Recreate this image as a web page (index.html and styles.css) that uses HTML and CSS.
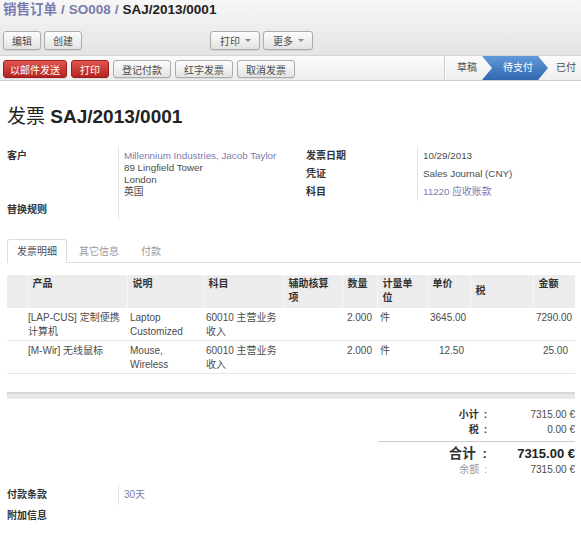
FILE: index.html
```html
<!DOCTYPE html>
<html lang="zh-CN">
<head>
<meta charset="utf-8">
<title>发票 SAJ/2013/0001</title>
<link rel="stylesheet" href="styles.css">
</head>
<body>
<div class="vm-header">
  <div class="breadcrumb"><a class="bc-link">销售订单</a><span class="bc-sep">/</span><a class="bc-link">SO008</a><span class="bc-sep">/</span><span class="bc-current">SAJ/2013/0001</span></div>
  <div class="toolbar">
    <div class="btn-group">
      <button class="btn">编辑</button>
      <button class="btn">创建</button>
    </div>
    <div class="btn-group sidebar">
      <button class="btn btn-drop">打印<span class="caret"></span></button>
      <button class="btn btn-drop">更多<span class="caret"></span></button>
    </div>
  </div>
</div>
<div class="form-header">
  <div class="actions">
    <button class="btn btn-red btn-wide">以邮件发送</button>
    <button class="btn btn-red">打印</button>
    <button class="btn">登记付款</button>
    <button class="btn">红字发票</button>
    <button class="btn">取消发票</button>
  </div>
  <div class="statusbar">
    <span class="st-item">草稿</span>
    <span class="st-item st-active">待支付</span>
    <span class="st-item st-last">已付</span>
  </div>
</div>
<div class="sheet">
  <h1 class="title"><span class="title-kind">发票</span> <span class="title-num">SAJ/2013/0001</span></h1>
  <div class="groups">
    <div class="group">
      <div class="lbl">客户</div>
      <div class="val"><a class="link">Millennium Industries, Jacob Taylor</a><br>89 Lingfield Tower<br>London<br>英国</div>
      <div class="lbl">替换规则</div>
      <div class="val"></div>
    </div>
    <div class="group">
      <div class="lbl">发票日期</div>
      <div class="val">10/29/2013</div>
      <div class="lbl">凭证</div>
      <div class="val">Sales Journal (CNY)</div>
      <div class="lbl">科目</div>
      <div class="val"><a class="link">11220 应收账款</a></div>
    </div>
  </div>

  <div class="tabs">
    <span class="tab active">发票明细</span>
    <span class="tab">其它信息</span>
    <span class="tab">付款</span>
  </div>

  <table class="lines">
    <colgroup>
      <col class="c-handle"><col class="c-product"><col class="c-desc"><col class="c-account"><col class="c-analytic"><col class="c-qty"><col class="c-uom"><col class="c-price"><col class="c-tax"><col class="c-amount">
    </colgroup>
    <thead>
      <tr>
        <th></th>
        <th>产品</th>
        <th>说明</th>
        <th>科目</th>
        <th>辅助核算项</th>
        <th>数量</th>
        <th>计量单位</th>
        <th>单价</th>
        <th class="th-mid">税</th>
        <th>金额</th>
      </tr>
    </thead>
    <tbody>
      <tr>
        <td></td>
        <td class="td-product">[LAP-CUS] 定制便携计算机</td>
        <td>Laptop Customized</td>
        <td>60010 主营业务收入</td>
        <td></td>
        <td class="num">2.000</td>
        <td>件</td>
        <td class="num num-price">3645.00</td>
        <td></td>
        <td class="num num-amount">7290.00</td>
      </tr>
      <tr>
        <td></td>
        <td class="td-product">[M-Wir] 无线鼠标</td>
        <td>Mouse, Wireless</td>
        <td>60010 主营业务收入</td>
        <td></td>
        <td class="num">2.000</td>
        <td>件</td>
        <td class="num num-price">12.50</td>
        <td></td>
        <td class="num num-amount">25.00</td>
      </tr>
    </tbody>
  </table>
  <div class="filler"></div>
  <div class="list-footer"></div>

  <div class="totals">
    <div class="t-row"><span class="t-lbl">小计&ensp;:</span><span class="t-val">7315.00 €</span></div>
    <div class="t-row"><span class="t-lbl">税&ensp;:</span><span class="t-val">0.00 €</span></div>
    <div class="t-row t-total"><span class="t-lbl">合计&ensp;:</span><span class="t-val">7315.00 €</span></div>
    <div class="t-row t-residual"><span class="t-lbl">余额&ensp;:</span><span class="t-val">7315.00 €</span></div>
  </div>

  <div class="bottom">
    <div class="lbl">付款条款</div>
    <div class="val"><a class="link">30天</a></div>
    <div class="lbl lbl-notes">附加信息</div>
    <div></div>
  </div>
</div>
</body>
</html>
```

FILE: styles.css
```css
* { box-sizing: border-box; }

body {
  margin: 0;
  width: 581px;
  overflow: hidden;
  font-family: "Liberation Sans", "Noto Sans CJK SC", sans-serif;
  font-size: 10px;
  line-height: 12px;
  color: #4c4c4c;
  background: #fff;
}

a { text-decoration: none; }

/* ---------- top header ---------- */
.vm-header {
  height: 56px;
  padding: 0 3px;
  background: linear-gradient(#f7f7f7, #e4e4e4);
  border-bottom: 1px solid #d4d4d4;
}

.breadcrumb {
  height: 22px;
  line-height: 19px;
  font-size: 13.5px;
  font-weight: bold;
  color: #7c7bad;
  white-space: nowrap;
}

.bc-link { color: #7c7bad; }
.bc-sep { margin: 0 4px; }
.bc-current { color: #222; }

.toolbar {
  display: flex;
  margin-top: 9px;
}

.btn-group {
  display: flex;
  gap: 3px;
}

.sidebar { margin-left: 128px; }

.btn {
  display: inline-flex;
  align-items: center;
  height: 19px;
  padding: 0 8px;
  font-family: "Liberation Sans", "Noto Sans CJK SC", sans-serif;
  font-size: 10px;
  color: #4c4c4c;
  background: linear-gradient(#fdfdfd, #e3e3e3);
  border: 1px solid #ababab;
  border-radius: 3px;
  box-shadow: 0 1px 1px rgba(0, 0, 0, 0.08);
  white-space: nowrap;
}

.btn-drop { padding: 0 8px 0 9px; }

.caret {
  display: inline-block;
  margin-left: 5px;
  border-top: 3px solid #888;
  border-left: 3px solid transparent;
  border-right: 3px solid transparent;
}

/* ---------- form header ---------- */
.form-header {
  display: flex;
  height: 25px;
  background: linear-gradient(#fbfbfb, #eeeeee);
  border-bottom: 1px solid #cdcdcd;
}

.actions {
  display: flex;
  gap: 4px;
  padding: 4px 0 0 3px;
}

.actions .btn { height: 18px; }
.actions .btn-wide { padding: 0 6px; }

.btn-red {
  color: #fff;
  background: linear-gradient(#df5550, #b5231f);
  border-color: #9e1d1a;
}

.statusbar {
  display: flex;
  margin-left: auto;
  height: 24px;
  border-left: 1px solid #cfcfcf;
  box-shadow: inset 1px 0 #fff;
}

.st-item {
  line-height: 24px;
  padding: 0 5px 0 12px;
  color: #4c4c4c;
  white-space: nowrap;
}

.st-active {
  padding: 0 15px 0 21px;
  color: #fff;
  background: linear-gradient(#6199d8, #2f68b1);
  clip-path: polygon(0 0, calc(100% - 10px) 0, 100% 50%, calc(100% - 10px) 100%, 0 100%, 10px 50%);
}

.st-last { padding-left: 8px; }

/* ---------- sheet ---------- */
.sheet { padding: 0 6px 0 7px; }

.title {
  margin: 24px 0 0;
  font-size: 19px;
  line-height: 24px;
  font-weight: normal;
  color: #222;
}

.title-num { font-weight: bold; }

.groups {
  display: grid;
  grid-template-columns: 299px 1fr;
  margin-top: 18px;
}

.group {
  display: grid;
  grid-template-columns: 111px 1fr;
  align-content: start;
}

.lbl {
  padding: 3px 0;
  font-weight: bold;
  color: #333;
}

.val {
  min-height: 18px;
  padding: 3px 0 3px 5px;
  border-left: 1px solid #e3e3e3;
}

.group .val { font-size: 9.8px; }

.link { color: #7c7bad; }

/* ---------- tabs ---------- */
.tabs {
  display: flex;
  height: 24px;
  margin: 20px -6px 0 0;
  border-bottom: 1px solid #dddddd;
}

.tab {
  height: 24px;
  margin-right: 2px;
  padding: 0 9px;
  line-height: 23px;
  color: #999;
  border: 1px solid transparent;
  border-bottom: none;
  border-radius: 3px 3px 0 0;
}

.tab.active {
  color: #4c4c4c;
  background: #fff;
  border-color: #dddddd;
}

/* ---------- lines table ---------- */
.lines {
  width: 568px;
  margin-top: 12px;
  border-collapse: collapse;
  table-layout: fixed;
}

.c-handle { width: 20px; }
.c-product { width: 100px; }
.c-desc { width: 76px; }
.c-account { width: 80px; }
.c-analytic { width: 59px; }
.c-qty { width: 35px; }
.c-uom { width: 50px; }
.c-price { width: 43px; }
.c-tax { width: 63px; }
.c-amount { width: 42px; }

.lines th {
  padding: 2px 6px 3px 5px;
  line-height: 14px;
  text-align: left;
  vertical-align: top;
  font-weight: bold;
  color: #333;
  background: #ececec;
  border-left: 1px solid #f7f7f7;
}

.lines th:first-child { border-left: none; }
.lines th.th-mid { vertical-align: middle; }

.lines td {
  padding: 3px 3px 1px;
  line-height: 14px;
  vertical-align: top;
  border-bottom: 1px solid #e6e6e6;
}

.lines td.td-product { padding-left: 1px; }
.lines td.num { text-align: right; padding-right: 5px; }
.lines td.num-price { padding-right: 6px; }
.lines td.num-amount { padding-right: 7px; }

.filler { height: 18px; }

.list-footer {
  width: 568px;
  height: 7px;
  background: #e9e9e9;
  border-top: 2px solid #d6d6d6;
}

/* ---------- totals ---------- */
.totals {
  width: 197px;
  margin: 8px 0 0 auto;
}

.t-row {
  display: flex;
  line-height: 15px;
}

.t-lbl {
  width: 109px;
  text-align: right;
  font-weight: bold;
  color: #333;
}

.t-val {
  flex: 1;
  text-align: right;
}

.t-total {
  margin-top: 4px;
  padding-top: 3px;
  line-height: 18px;
  border-top: 1px solid #cccccc;
}

.t-total .t-lbl { font-size: 13.5px; }
.t-total .t-val { font-size: 13px; font-weight: bold; color: #222; }

.t-residual { line-height: 14px; }
.t-residual .t-lbl { font-weight: normal; color: #999; }

/* ---------- bottom ---------- */
.bottom {
  display: grid;
  grid-template-columns: 111px 1fr;
  margin-top: 8px;
}

.bottom .lbl { padding: 4px 0; }
.bottom .val { padding: 4px 0 4px 5px; min-height: 20px; }
.bottom .lbl-notes { padding-top: 5px; }
```
